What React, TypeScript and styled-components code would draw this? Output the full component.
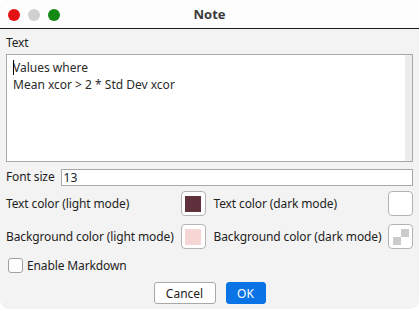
import styled, { createGlobalStyle } from "styled-components";

const GlobalStyle = createGlobalStyle`
  html, body {
    margin: 0;
    padding: 0;
    background: #ffffff;
  }
  body {
    font-family: "Noto Sans", "DejaVu Sans", sans-serif;
    font-size: 12px;
    color: #1e1e1e;
  }
`;

const Window = styled.div`
  width: 419px;
  height: 309px;
  border-radius: 9px;
  overflow: hidden;
  background: #f3f3f3;
  display: flex;
  flex-direction: column;
`;

const TitleBar = styled.div`
  height: 28px;
  flex: none;
  background: #fdfdfd;
  border-bottom: 1px solid #1a1a1a;
  display: flex;
  align-items: center;
  position: relative;
  padding-left: 8px;
  gap: 8px;
`;

const Light = styled.span<{ $color: string }>`
  width: 12px;
  height: 12px;
  border-radius: 50%;
  background: ${(p) => p.$color};
  margin-top: 2px;
`;

const Title = styled.div`
  position: absolute;
  left: 0;
  right: 0;
  top: 5px;
  text-align: center;
  font-weight: bold;
  font-size: 13px;
  color: #3a3a3a;
  pointer-events: none;
`;

const Body = styled.div`
  flex: 1;
  display: flex;
  flex-direction: column;
  padding: 5px 6px 0 6px;
`;

const Label = styled.div`
  line-height: 18px;
  white-space: nowrap;
  letter-spacing: -0.12px;
`;

const TextBox = styled.div`
  margin-top: 2px;
  height: 106px;
  border: 1px solid #a8a8a8;
  background: #ffffff;
  display: flex;
`;

const TextContent = styled.div`
  flex: 1;
  padding: 4px 6px;
  line-height: 17px;
  color: #2a2a2a;
  position: relative;
`;

const Caret = styled.span`
  position: absolute;
  left: 6px;
  top: 5px;
  width: 1px;
  height: 15px;
  background: #000;
`;

const ScrollTrack = styled.div`
  width: 7px;
  background: #ececec;
`;

const FontRow = styled.div`
  margin-top: 6px;
  display: flex;
  align-items: center;
  gap: 6px;
`;

const FontInput = styled.div`
  flex: 1;
  height: 15px;
  border: 1px solid #a8a8a8;
  background: #ffffff;
  line-height: 15px;
  padding-left: 2px;
  color: #222;
`;

const ColorGrid = styled.div`
  margin-top: 5px;
  display: grid;
  grid-template-columns: 1fr 1fr;
  column-gap: 8px;
  row-gap: 8px;
`;

const ColorField = styled.div`
  display: flex;
  align-items: center;
  justify-content: space-between;
`;

const Swatch = styled.div`
  width: 23px;
  height: 23px;
  border: 1px solid #b4b4b4;
  border-radius: 4px;
  background: #ffffff;
  display: flex;
  align-items: center;
  justify-content: center;
`;

const SwatchFill = styled.div<{ $color: string }>`
  width: 16px;
  height: 16px;
  background: ${(p) => p.$color};
`;

const Checker = styled.div`
  width: 16px;
  height: 16px;
  display: grid;
  grid-template-columns: 8px 8px;
  grid-template-rows: 8px 8px;
`;

const CheckCell = styled.div<{ $dark: boolean }>`
  background: ${(p) => (p.$dark ? "#cccccc" : "#ffffff")};
`;

const CheckRow = styled.label`
  margin-top: 9px;
  margin-left: 2px;
  display: flex;
  align-items: center;
  gap: 4px;
  height: 15px;
  letter-spacing: -0.12px;
`;

const CheckBox = styled.span`
  width: 13px;
  height: 13px;
  border: 1px solid #a0a0a0;
  border-radius: 3px;
  background: #ffffff;
`;

const Buttons = styled.div`
  margin-top: 9px;
  display: flex;
  justify-content: center;
  gap: 10px;
`;

const Button = styled.button<{ $primary?: boolean }>`
  width: ${(p) => (p.$primary ? "40px" : "62px")};
  height: 22px;
  padding: 0;
  font-family: inherit;
  font-size: 12px;
  border-radius: 3px;
  border: 1px solid ${(p) => (p.$primary ? "#0a74e6" : "#a8a8a8")};
  background: ${(p) => (p.$primary ? "#0a74e6" : "#ffffff")};
  color: ${(p) => (p.$primary ? "#ffffff" : "#1e1e1e")};
`;

export default function App() {
  return (
    <>
      <GlobalStyle />
      <Window>
        <TitleBar>
          <Light $color="#e41212" />
          <Light $color="#d0d0d0" />
          <Light $color="#148a14" />
          <Title>Note</Title>
        </TitleBar>
        <Body>
          <Label>Text</Label>
          <TextBox>
            <TextContent>
              <Caret />
              Values where
              <br />
              Mean xcor &gt; 2 * Std Dev xcor
            </TextContent>
            <ScrollTrack />
          </TextBox>
          <FontRow>
            <Label>Font size</Label>
            <FontInput>13</FontInput>
          </FontRow>
          <ColorGrid>
            <ColorField>
              <Label>Text color (light mode)</Label>
              <Swatch>
                <SwatchFill $color="#5e313c" />
              </Swatch>
            </ColorField>
            <ColorField>
              <Label>Text color (dark mode)</Label>
              <Swatch />
            </ColorField>
            <ColorField>
              <Label>Background color (light mode)</Label>
              <Swatch>
                <SwatchFill $color="#f6d6d4" />
              </Swatch>
            </ColorField>
            <ColorField>
              <Label>Background color (dark mode)</Label>
              <Swatch>
                <Checker>
                  <CheckCell $dark={false} />
                  <CheckCell $dark />
                  <CheckCell $dark />
                  <CheckCell $dark={false} />
                </Checker>
              </Swatch>
            </ColorField>
          </ColorGrid>
          <CheckRow>
            <CheckBox />
            Enable Markdown
          </CheckRow>
          <Buttons>
            <Button>Cancel</Button>
            <Button $primary>OK</Button>
          </Buttons>
        </Body>
      </Window>
    </>
  );
}
